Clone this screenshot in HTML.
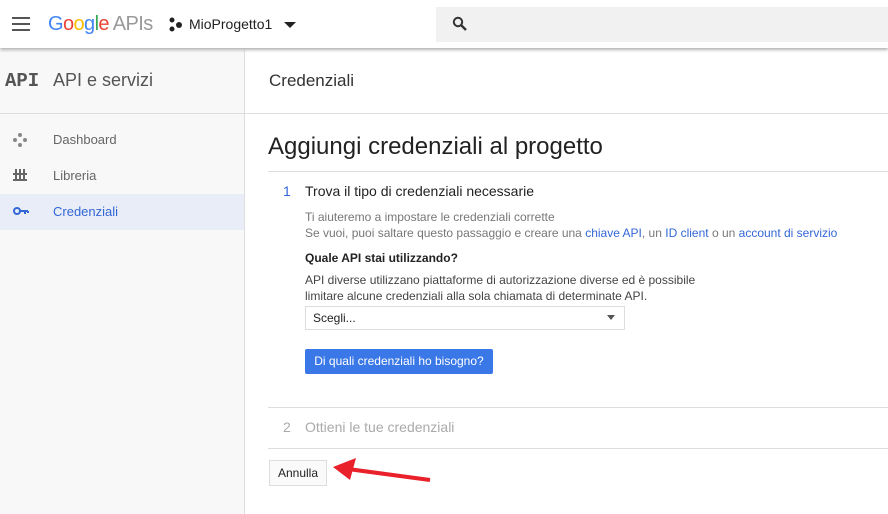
<!DOCTYPE html><html><head><style>
body{margin:0;width:888px;height:514px;overflow:hidden;font-family:"Liberation Sans",Arial,sans-serif;background:#fff;position:relative}
.a{position:absolute;white-space:nowrap}
a{color:#3367d6;text-decoration:none}
</style></head><body>
<div class="a" style="left:0;top:50px;width:244px;height:464px;background:#f8f8f8;border-right:1px solid #ddd"></div>
<div class="a" style="left:0;top:0;width:888px;height:48px;background:#fff;box-shadow:0 2px 3px rgba(0,0,0,.3)"></div>
<div class="a" style="left:12px;top:17px;width:18px;height:2px;background:#555;box-shadow:0 6px 0 #555,0 12px 0 #555"></div>
<div class="a" style="left:48px;top:13px;font-size:20px;letter-spacing:-0.6px"><span style="color:#4285f4">G</span><span style="color:#ea4335">o</span><span style="color:#fbbc05">o</span><span style="color:#4285f4">g</span><span style="color:#34a853">l</span><span style="color:#ea4335">e</span> <span style="color:#999">APIs</span></div>
<svg class="a" style="left:168px;top:17px" width="16" height="16"><circle cx="4" cy="3" r="2.5" fill="#222"/><circle cx="4" cy="12" r="2.5" fill="#222"/><circle cx="11" cy="8" r="3" fill="#222"/></svg>
<div class="a" style="left:189px;top:16px;font-size:14px;color:#222">MioProgetto1</div>
<div class="a" style="left:284px;top:22px;border:6px solid transparent;border-top:6px solid #222"></div>
<div class="a" style="left:436px;top:7px;width:452px;height:35px;background:#f1f1f1"></div>
<svg class="a" style="left:452px;top:16px" width="16" height="16"><circle cx="6" cy="6" r="4.2" stroke="#333" stroke-width="2" fill="none"/><path d="M9 9l5 5" stroke="#333" stroke-width="2.4"/></svg>
<div class="a" style="left:5px;top:70px;font-family:'Liberation Mono',monospace;font-weight:bold;font-size:19px;color:#555">API</div>
<div class="a" style="left:53px;top:70px;font-size:18px;color:#555">API e servizi</div>
<div class="a" style="left:0;top:113px;width:888px;height:1px;background:#ddd"></div>
<div class="a" style="left:269px;top:71px;font-size:17px;color:#333">Credenziali</div>
<svg class="a" style="left:12px;top:132px" width="16" height="16" fill="#888"><circle cx="8" cy="3" r="2"/><circle cx="8" cy="13" r="2"/><circle cx="3" cy="8" r="2"/><circle cx="13" cy="8" r="2"/></svg>
<div class="a" style="left:53px;top:132px;font-size:13px;color:#666">Dashboard</div>
<svg class="a" style="left:13px;top:168px" width="14" height="14" fill="#666"><rect x="0" y="5" width="14" height="2"/><rect x="0" y="11" width="14" height="2"/><rect x="2" y="1" width="2" height="12"/><rect x="6" y="1" width="2" height="12"/><rect x="10" y="1" width="2" height="12"/></svg>
<div class="a" style="left:53px;top:168px;font-size:13px;color:#666">Libreria</div>
<div class="a" style="left:0;top:194px;width:244px;height:36px;background:#e8edf7"></div>
<svg class="a" style="left:13px;top:206px" width="16" height="10"><circle cx="4" cy="5" r="3" stroke="#3367d6" stroke-width="2" fill="none"/><path d="M7 5h8M12 5v3M15 5v2" stroke="#3367d6" stroke-width="2"/></svg>
<div class="a" style="left:53px;top:204px;font-size:13px;color:#3367d6">Credenziali</div>
<div class="a" style="left:268px;top:133px;font-size:24px;color:#222">Aggiungi credenziali al progetto</div>
<div class="a" style="left:268px;top:171px;width:620px;height:1px;background:#ddd"></div>
<div class="a" style="left:283px;top:183px;font-size:14px;color:#3367d6">1</div>
<div class="a" style="left:305px;top:183px;font-size:14px;color:#222">Trova il tipo di credenziali necessarie</div>
<div class="a" style="left:305px;top:209px;font-size:12px;color:#777;line-height:16px">Ti aiuteremo a impostare le credenziali corrette<br>Se vuoi, puoi saltare questo passaggio e creare una <a>chiave API</a>, un <a>ID client</a> o un <a>account di servizio</a></div>
<div class="a" style="left:305px;top:251px;font-size:12px;color:#222;font-weight:bold">Quale API stai utilizzando?</div>
<div class="a" style="left:305px;top:272px;font-size:12px;color:#444;line-height:16px">API diverse utilizzano piattaforme di autorizzazione diverse ed è possibile<br>limitare alcune credenziali alla sola chiamata di determinate API.</div>
<div class="a" style="left:305px;top:306px;width:318px;height:22px;border:1px solid #ddd;background:#fff"></div>
<div class="a" style="left:313px;top:311px;font-size:12px;color:#222">Scegli...</div>
<div class="a" style="left:607px;top:315px;border:4px solid transparent;border-top:5px solid #555"></div>
<div class="a" style="left:305px;top:349px;width:188px;height:25px;background:#3b78e7;border-radius:2px;color:#fff;font-size:12px;line-height:25px;text-align:center">Di quali credenziali ho bisogno?</div>
<div class="a" style="left:268px;top:407px;width:620px;height:1px;background:#ddd"></div>
<div class="a" style="left:283px;top:419px;font-size:14px;color:#aaa">2</div>
<div class="a" style="left:305px;top:419px;font-size:14px;color:#aaa">Ottieni le tue credenziali</div>
<div class="a" style="left:268px;top:448px;width:620px;height:1px;background:#ddd"></div>
<div class="a" style="left:269px;top:460px;width:56px;height:24px;border:1px solid #ddd;background:#fafafa;font-size:12px;color:#222;line-height:24px;text-align:center">Annulla</div>
<svg class="a" style="left:330px;top:458px" width="105" height="32"><path d="M100 22L18 11" stroke="#e8212a" stroke-width="4"/><path d="M3 9L26 0L20 22Z" fill="#e8212a"/></svg>
</body></html>
